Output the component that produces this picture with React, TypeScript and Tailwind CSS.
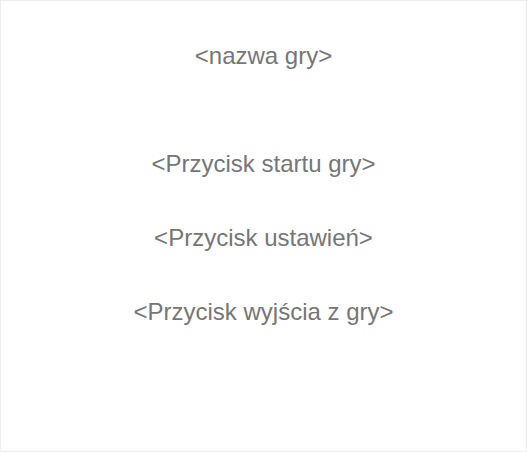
import React from 'react';

const App: React.FC = () => {
  const buttons = ['<Przycisk startu gry>', '<Przycisk ustawień>', '<Przycisk wyjścia z gry>'];

  return (
    <div className="w-[527px] h-[452px] border border-[#ececec] bg-white flex flex-col items-center pt-[41px] font-['Liberation_Sans',Arial,sans-serif] text-[24px] leading-[28px] text-[#767676]">
      <h1>{'<nazwa gry>'}</h1>
      <div className="mt-[80px] flex flex-col items-center gap-[46px]">
        {buttons.map((label) => (
          <button key={label} className="leading-[28px]">
            {label}
          </button>
        ))}
      </div>
    </div>
  );
};

export default App;
